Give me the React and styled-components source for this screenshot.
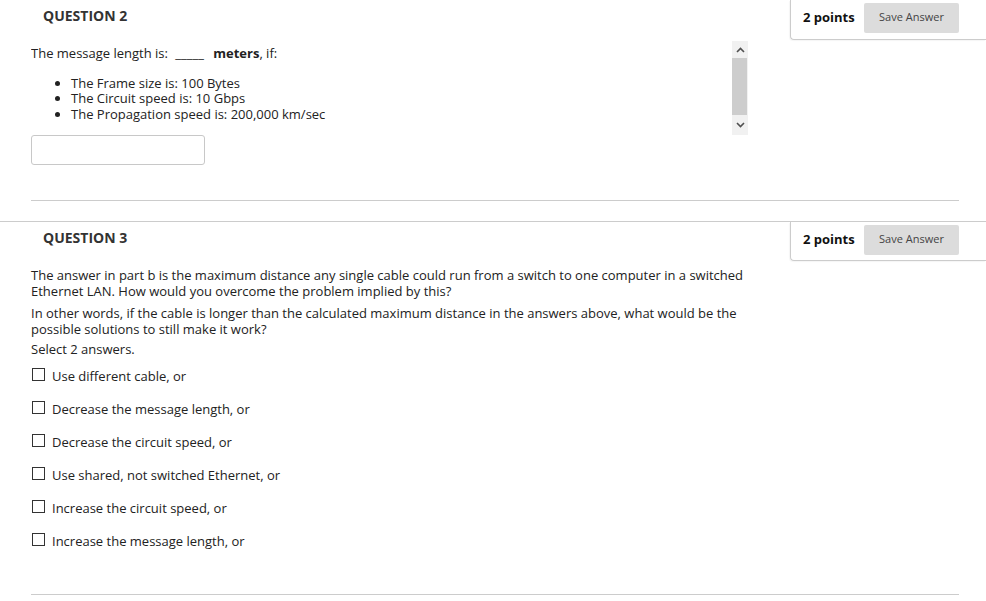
import React from 'react'
import styled, { createGlobalStyle } from 'styled-components'

const GlobalStyle = createGlobalStyle`
  body {
    margin: 0;
    background: #fff;
    font-family: "Open Sans", "Liberation Sans", sans-serif;
    font-size: 13px;
    color: #222;
  }
`

const Page = styled.div`
  width: 986px;
  overflow: hidden;
`

const Question = styled.section`
  border-top: ${props => (props.first ? 'none' : '1px solid #ccc')};
  margin-top: ${props => (props.first ? '0' : '20px')};
`

const Header = styled.div`
  display: flex;
  justify-content: space-between;
  height: ${props => (props.first ? '40px' : '39px')};
`

const Title = styled.h2`
  margin: 0;
  padding: 6px 0 0 43px;
  font-size: 14px;
  line-height: 20px;
  font-weight: 700;
  color: #333;
`

const PointsBox = styled.div`
  width: 196px;
  box-sizing: border-box;
  display: flex;
  align-items: flex-start;
  padding: 3px 27px 0 12px;
  border-left: 1px solid #ccc;
  border-bottom: 1px solid #ccc;
  border-bottom-left-radius: 4px;
  box-shadow: -1px 1px 1px rgba(0, 0, 0, 0.04);
`

const Points = styled.span`
  font-weight: 700;
  color: #111;
  line-height: 29px;
  margin-right: auto;
  white-space: nowrap;
`

const SaveButton = styled.button`
  width: 95px;
  height: 30px;
  border: none;
  border-radius: 2px;
  background: #dcdcdc;
  color: #444;
  font-family: "Open Sans", "Liberation Sans", sans-serif;
  font-size: 11px;
  line-height: 28px;
  padding: 0 0 2px;
`

const ScrollArea = styled.div`
  display: flex;
  margin: 1px 0 0 31px;
  width: 717px;
  height: 94px;
`

const ScrollContent = styled.div`
  flex: 1;
  padding-top: 5px;
  overflow: hidden;
`

const ScrollBar = styled.div`
  width: 16px;
  display: flex;
  flex-direction: column;
  background: #f1f1f1;
`

const ArrowCell = styled.div`
  height: ${props => props.h}px;
  display: flex;
  align-items: center;
  justify-content: center;
`

const Thumb = styled.div`
  height: 57px;
  width: 15px;
  background: #cdcdcd;
`

const Text = styled.p`
  margin: 0 0 ${props => props.gap || 0}px;
  line-height: 15.5px;
`

const Blank = styled.span`
  display: inline-block;
  margin: 0 6px 0 4px;
`

const Bullets = styled.ul`
  margin: 14px 0 0;
  padding-left: 40px;
  line-height: 15.5px;
  list-style: disc;
`

const AnswerInput = styled.input`
  display: block;
  margin: 0 0 0 31px;
  width: 174px;
  height: 30px;
  box-sizing: border-box;
  border: 1px solid #c8c8c8;
  border-radius: 3px;
  background: #fff;
`

const Divider = styled.hr`
  margin: ${props => props.top}px 27px 0 31px;
  border: none;
  border-top: 1px solid #ccc;
`

const Body = styled.div`
  margin-left: 31px;
  width: 717px;
  padding-top: 7px;
`

const Options = styled.div`
  display: flex;
  flex-direction: column;
  gap: 14px;
  margin-top: 9px;
`

const Option = styled.label`
  display: flex;
  align-items: center;
  gap: 7px;
  height: 19px;
`

const Box = styled.span`
  width: 13px;
  height: 13px;
  box-sizing: border-box;
  border: 1px solid #333;
  margin: -4px 0 0 1px;
  background: #fff;
`

function Chevron({ up }) {
  return (
    <svg width="9" height="6" viewBox="0 0 9 6">
      <path
        d={up ? 'M1 5 L4.5 1.5 L8 5' : 'M1 1 L4.5 4.5 L8 1'}
        fill="none"
        stroke="#505050"
        strokeWidth="1.6"
      />
    </svg>
  )
}

function QuestionHeader({ title, first }) {
  return (
    <Header first={first}>
      <Title>{title}</Title>
      <PointsBox>
        <Points>2 points</Points>
        <SaveButton>Save Answer</SaveButton>
      </PointsBox>
    </Header>
  )
}

const options = [
  'Use different cable, or',
  'Decrease the message length, or',
  'Decrease the circuit speed, or',
  'Use shared, not switched Ethernet, or',
  'Increase the circuit speed, or',
  'Increase the message length, or',
]

export default function App() {
  return (
    <Page>
      <GlobalStyle />
      <Question first>
        <QuestionHeader title="QUESTION 2" first />
        <ScrollArea>
          <ScrollContent>
            <Text>
              The message length is: <Blank>_____</Blank> <b>meters</b>, if:
            </Text>
            <Bullets>
              <li>The Frame size is: 100 Bytes</li>
              <li>The Circuit speed is: 10 Gbps</li>
              <li>The Propagation speed is: 200,000 km/sec</li>
            </Bullets>
          </ScrollContent>
          <ScrollBar>
            <ArrowCell h={17}><Chevron up /></ArrowCell>
            <Thumb />
            <ArrowCell h={20}><Chevron /></ArrowCell>
          </ScrollBar>
        </ScrollArea>
        <AnswerInput type="text" />
        <Divider top={35} />
      </Question>

      <Question>
        <QuestionHeader title="QUESTION 3" />
        <Body>
          <Text gap={7}>
            The answer in part b is the maximum distance any single cable could run from a switch to one
            computer in a switched Ethernet LAN. How would you overcome the problem implied by this?
          </Text>
          <Text gap={5}>
            In other words, if the cable is longer than the calculated maximum distance in the answers
            above, what would be the possible solutions to still make it work?
          </Text>
          <Text>Select 2 answers.</Text>
          <Options>
            {options.map(o => (
              <Option key={o}>
                <Box />
                <span>{o}</span>
              </Option>
            ))}
          </Options>
        </Body>
        <Divider top={43} />
      </Question>
    </Page>
  )
}
